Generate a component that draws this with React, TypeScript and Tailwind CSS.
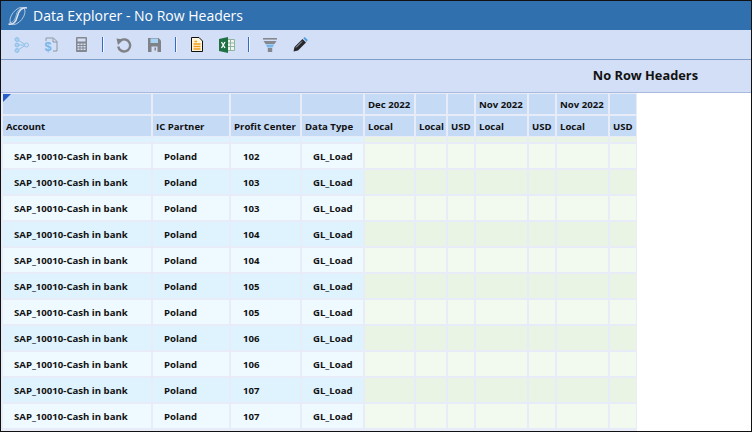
const columns = [
  { width: "w-[148px]", top: "", label: "Account" },
  { width: "w-[76px]", top: "", label: "IC Partner" },
  { width: "w-[69px]", top: "", label: "Profit Center" },
  { width: "w-[61px]", top: "", label: "Data Type" },
  { width: "w-[49px]", top: "Dec 2022", label: "Local" },
  { width: "w-[30px]", top: "", label: "Local" },
  { width: "w-[26px]", top: "", label: "USD" },
  { width: "w-[51px]", top: "Nov 2022", label: "Local" },
  { width: "w-[26px]", top: "", label: "USD" },
  { width: "w-[51px]", top: "Nov 2022", label: "Local" },
  { width: "w-[26px]", top: "", label: "USD" },
];

const rows = [102, 103, 103, 104, 104, 105, 105, 106, 106, 107, 107];

function Divider({ className }: { className: string }) {
  return <div className={`h-[15px] w-[2px] border-l border-[#2f6cc4] bg-white/70 ${className}`} />;
}

function Toolbar() {
  return (
    <div className="flex h-[30px] items-center border-b border-[#7f9bc9] bg-[#d3dff6] pl-[13px]">
      <svg width="15" height="16" viewBox="0 0 15 16" fill="none" stroke="#8fc0e8" strokeWidth="1">
        <path d="M3 2.5L12 8L3 13.5M3 8H12" />
        <circle cx="3" cy="2.5" r="2" fill="#a8d0f0" />
        <circle cx="3" cy="8" r="2" fill="#a8d0f0" />
        <circle cx="3" cy="13.5" r="2" fill="#a8d0f0" />
        <circle cx="12.5" cy="8" r="2" fill="#d3dff6" />
      </svg>
      <svg className="ml-[15px]" width="14" height="16" viewBox="0 0 14 16" fill="none">
        <path d="M2 4V1H9.5L13 4.5V14H9" stroke="#8d97a6" />
        <path d="M9 1.5V5H13" stroke="#8d97a6" />
        <text x="0.5" y="14" fontSize="12.5" fontWeight="700" fill="#76b6e8" fontFamily="Liberation Sans">$</text>
      </svg>
      <svg className="ml-[18px]" width="11" height="15" viewBox="0 0 11 15">
        <rect width="11" height="15" rx="1" fill="#85888f" />
        <rect x="1.5" y="1.5" width="8" height="3" fill="#d3dff6" />
        <path d="M1.5 6.5h2V8h-2zM4.5 6.5h2V8h-2zM7.5 6.5h2V8h-2zM1.5 9h2v1.5h-2zM4.5 9h2v1.5h-2zM7.5 9h2v1.5h-2zM1.5 11.5h2V13h-2zM4.5 11.5h2V13h-2zM7.5 11.5h2V13h-2z" fill="#d3dff6" />
      </svg>
      <Divider className="ml-[15px]" />
      <svg className="ml-[12px]" width="16" height="16" viewBox="0 0 16 16" fill="none">
        <path d="M4.5 3.6A6 6 0 1 1 2.2 9.5" stroke="#7f8287" strokeWidth="2.4" />
        <path d="M0.5 1.5L7.5 2.5L2 8Z" fill="#7f8287" />
      </svg>
      <svg className="ml-[16px]" width="13" height="14" viewBox="0 0 13 14">
        <path d="M0 0H10.5L13 2.5V14H0Z" fill="#7f8287" />
        <rect x="2.5" y="0.5" width="7.5" height="4.5" fill="#a9d3f5" />
        <rect x="3.5" y="8.5" width="6" height="5.5" fill="#d3dff6" />
        <rect x="6.5" y="9.5" width="1.5" height="3" fill="#7f8287" />
      </svg>
      <Divider className="ml-[14px]" />
      <svg className="ml-[14px]" width="12" height="15" viewBox="0 0 12 15">
        <path d="M0.5 0.5H8L11.5 4V14.5H0.5Z" fill="#fff7dc" stroke="#111" />
        <path d="M2.5 7H9.5M2.5 9.5H9.5M2.5 12H9.5M3.5 4.5H6" stroke="#ef9a1a" strokeWidth="1.4" />
      </svg>
      <svg className="ml-[16px]" width="16" height="16" viewBox="0 0 16 16">
        <path d="M7 2.5H15.5V13.5H7Z" fill="#eef5ee" stroke="#8fb39d" />
        <path d="M11.5 3V13M8 6H15M8 9.5H15" stroke="#8fb39d" />
        <path d="M0 2L9 0V16L0 14Z" fill="#1f7145" />
        <path d="M2.5 5L6 11M6 5L2.5 11" stroke="#fff" strokeWidth="1.3" />
      </svg>
      <Divider className="ml-[13px]" />
      <svg className="ml-[13px]" width="14" height="14" viewBox="0 0 14 14">
        <rect width="14" height="1.6" fill="#85888f" />
        <path d="M0.5 3H13.5L11.5 6H2.5Z" fill="#85888f" />
        <path d="M2.8 6.5H11.2L9.5 9.5H4.5Z" fill="#76b6e8" />
        <rect x="4.8" y="10" width="4.4" height="4" fill="#85888f" />
      </svg>
      <svg className="ml-[16px]" width="15" height="15" viewBox="0 0 15 15">
        <path d="M0.5 14.5L1.5 10L9.5 2L13 5.5L5 13.5Z" fill="#26262b" />
        <path d="M10.3 1.2L11.7 0L14.8 3L13.6 4.8Z" fill="#4f9fe0" />
        <path d="M3 10.5L9 4.5" stroke="#d3dff6" strokeWidth="0.8" />
      </svg>
    </div>
  );
}

export default function App() {
  return (
    <div className="flex h-[432px] w-[752px] flex-col overflow-hidden border border-[#111] bg-white font-['Open_Sans','Noto_Sans',sans-serif]">
      {/* title bar */}
      <div className="flex h-[29px] shrink-0 items-center bg-[#3070ae] pl-[6px] text-[14px] text-white">
        <svg width="21" height="20" viewBox="0 0 21 20" fill="none" stroke="#dbe4ef">
          <ellipse cx="10.5" cy="10" rx="10" ry="5.5" transform="rotate(-52 10.5 10)" strokeWidth="0.7" />
          <path d="M1.5 18C6 19.5 9 16 10.5 10C12 4.5 15 1 20 2" strokeWidth="1.5" />
          <path d="M2 17C6 17 8.5 13 9.5 8C10.5 4 14 1.5 18 2" strokeWidth="0.6" />
        </svg>
        <span className="ml-[5px]">Data Explorer - No Row Headers</span>
      </div>

      <Toolbar />

      <div className="flex h-[33px] shrink-0 items-center justify-end border-b border-[#a9b9dd] bg-[#d3dff6] pr-[53px] text-[12.8px] font-bold text-[#111]">
        No Row Headers
      </div>

      {/* grid */}
      <div className="flex w-[636px] grow flex-col gap-[2px] bg-[#e8ecf8] pl-[2px] pt-[1px] text-[9.6px] font-bold text-[#111]">
        <div className="flex gap-[2px]">
          {columns.map((col, i) => (
            <div key={i} className={`relative flex h-[20px] items-center bg-[#c5daf5] pl-[3px] pt-[3px] ${col.width}`}>
              {i === 0 && (
                <svg className="absolute left-0 top-0" width="8" height="8" viewBox="0 0 8 8">
                  <path d="M0 0H8L0 8Z" fill="#2a5fc8" />
                </svg>
              )}
              {col.top}
            </div>
          ))}
        </div>
        <div className="flex gap-[2px]">
          {columns.map((col, i) => (
            <div key={i} className={`flex h-[20px] items-center whitespace-nowrap bg-[#c5daf5] pl-[3px] pt-[3px] ${col.width}`}>
              {col.label}
            </div>
          ))}
        </div>
        {/* row scrolled almost out of view */}
        <div className="-mt-[1px] flex h-[5px] shrink-0 gap-[2px]">
          {columns.map((col, i) => (
            <div key={i} className={`${col.width} ${i < 4 ? "bg-[#def3fd]" : "bg-[#e9f4e5]"}`} />
          ))}
        </div>
        {rows.map((center, r) => (
          <div key={r} className="flex h-[24px] shrink-0 gap-[2px]">
            {columns.map((col, i) => {
              const odd = r % 2 === 1;
              const bg = i < 4 ? (odd ? "bg-[#def3fd]" : "bg-[#eefaff]") : odd ? "bg-[#e9f4e5]" : "bg-[#f2faf0]";
              return (
                <div key={i} className={`flex items-center pt-[3px] ${col.width} ${bg} ${i === 2 ? "pl-[12px]" : "pl-[11px]"}`}>
                  {i === 0 && "SAP_10010-Cash in bank"}
                  {i === 1 && "Poland"}
                  {i === 2 && center}
                  {i === 3 && "GL_Load"}
                </div>
              );
            })}
          </div>
        ))}
      </div>
    </div>
  );
}
